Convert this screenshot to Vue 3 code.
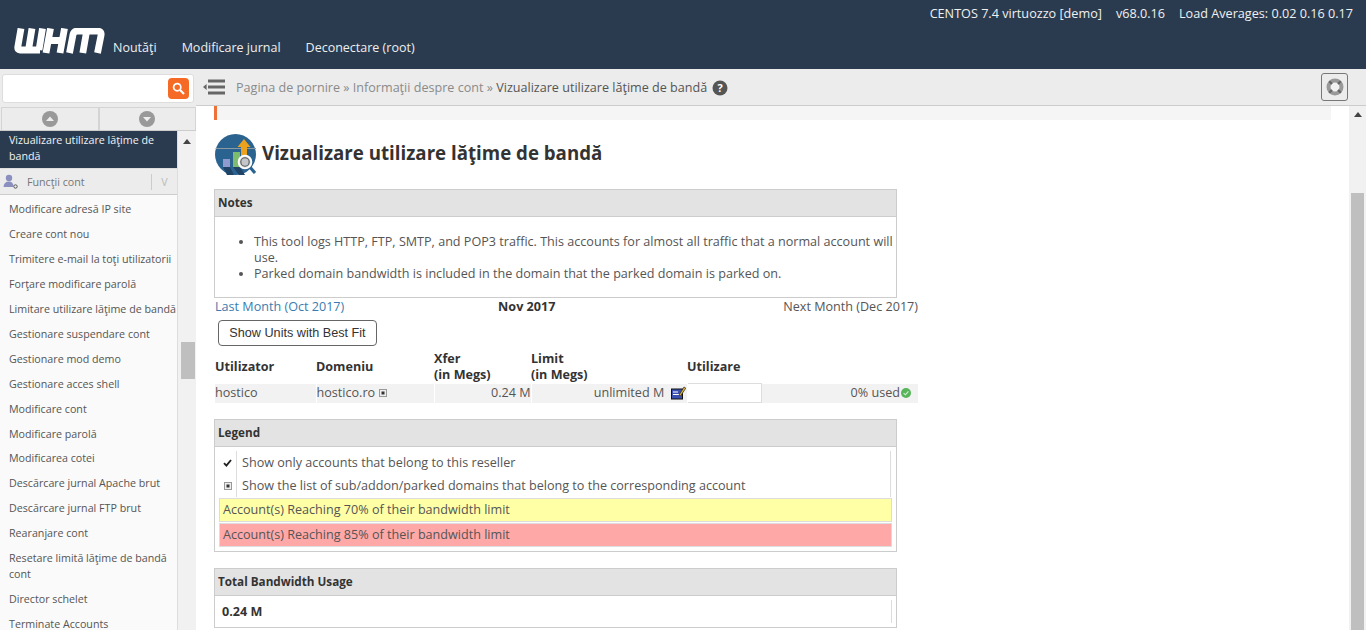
<script setup>
const topInfo = ['CENTOS 7.4 virtuozzo [demo]', 'v68.0.16', 'Load Averages: 0.02 0.16 0.17']
const nav = ['Noutăţi', 'Modificare jurnal', 'Deconectare (root)']
const menu = [
  'Modificare adresă IP site', 'Creare cont nou', 'Trimitere e-mail la toţi utilizatorii',
  'Forţare modificare parolă', 'Limitare utilizare lăţime de bandă', 'Gestionare suspendare cont',
  'Gestionare mod demo', 'Gestionare acces shell', 'Modificare cont', 'Modificare parolă',
  'Modificarea cotei', 'Descărcare jurnal Apache brut', 'Descărcare jurnal FTP brut',
  'Rearanjare cont', 'Resetare limită lăţime de bandă cont', 'Director schelet', 'Terminate Accounts'
]
</script>

<template>
  <div class="page">
    <header class="top">
      <div class="info"><span v-for="t in topInfo" :key="t">{{ t }}</span></div>
      <div class="navrow">
        <svg class="logo" width="92" height="26" viewBox="0 0 92 26" role="img" aria-label="WHM">
          <g fill="none" stroke="#fff" stroke-width="6.8">
            <path d="M7 0.5 L3.8 19 Q3.4 22 6 22 H26 M14.5 22 L18 0.5 M25 22 L28.5 0.5" />
            <path d="M36.5 0.5 L32 25 M50.5 0.5 L46 25 M34 12.5 H49" />
            <path d="M55.5 25 L59 6.5 Q60 3 63.5 3 H83 Q88 3 87 7.5 L83.5 25 M72.5 4 L68.8 25" />
          </g>
        </svg>
        <a v-for="n in nav" :key="n" class="navlink">{{ n }}</a>
      </div>
    </header>

    <div class="body">
      <aside class="side">
        <div class="searchwrap">
          <div class="search">
            <span class="sbtn">
              <svg width="13" height="13" viewBox="0 0 13 13"><circle cx="5.2" cy="5.2" r="3.6" fill="none" stroke="#fff" stroke-width="1.7"/><path d="M8 8 L12 12" stroke="#fff" stroke-width="2.2"/></svg>
            </span>
          </div>
        </div>
        <div class="updown">
          <div class="ud"><svg width="18" height="18" viewBox="0 0 18 18"><circle cx="9" cy="9" r="8" fill="#999"/><path d="M5 11 L9 6.5 L13 11Z" fill="#eee"/></svg></div>
          <div class="ud"><svg width="18" height="18" viewBox="0 0 18 18"><circle cx="9" cy="9" r="8" fill="#999"/><path d="M5 7 L9 11.5 L13 7Z" fill="#eee"/></svg></div>
        </div>
        <div class="sidescroll">
          <div class="menu">
            <div class="current">Vizualizare utilizare lăţime de bandă</div>
            <div class="group">
              <svg width="15" height="15" viewBox="0 0 15 15"><circle cx="6" cy="4" r="3.2" fill="#8a8fc0"/><path d="M0.5 13 Q1 7.5 6 7.5 Q10 7.5 10.5 12 L10 13Z" fill="#8a8fc0"/><circle cx="12.5" cy="12.5" r="1.7" fill="none" stroke="#555" stroke-width="1"/></svg>
              <span class="gname">Funcţii cont</span>
              <span class="gv">V</span>
            </div>
            <a v-for="m in menu" :key="m" class="item">{{ m }}</a>
          </div>
          <div class="sbar">
            <span class="tri"></span>
            <span class="thumb"></span>
          </div>
        </div>
      </aside>

      <div class="right">
        <div class="crumbs">
          <svg width="22" height="16" viewBox="0 0 22 16"><path d="M5 0.5H22V3.5H5ZM5 6.5H22V9.5H5ZM5 12.5H22V15.5H5Z" fill="#666"/><path d="M0 8 L3.6 5 V11Z" fill="#666"/></svg>
          <span class="trail"><span class="dim">Pagina de pornire » Informaţii despre cont » </span><span class="cur">Vizualizare utilizare lăţime de bandă</span></span>
          <svg class="q" width="16" height="16" viewBox="0 0 16 16"><circle cx="8" cy="8" r="7.5" fill="#555"/><text x="8" y="12" text-anchor="middle" font-size="11" font-weight="700" font-family="Open Sans" fill="#fff">?</text></svg>
          <span class="help">
            <svg width="20" height="20" viewBox="0 0 20 20"><circle cx="10" cy="10" r="6.5" fill="#f2f2f2" stroke="#999" stroke-width="4"/><path d="M4.2 4.2L7 7M15.8 4.2L13 7M4.2 15.8L7 13M15.8 15.8L13 13" stroke="#666" stroke-width="2.2"/></svg>
          </span>
        </div>
        <div class="contentrow">
          <main class="content">
            <div class="alertbar"></div>
            <div class="title">
              <svg width="42" height="42" viewBox="0 0 42 42">
                <circle cx="20.5" cy="20.5" r="20.5" fill="#2b6390"/>
                <path d="M0.5 14.5H41" stroke="#8b9aa0" stroke-width="1"/>
                <path d="M29 5L35.5 13H32V22H26V13H22.5Z" fill="#eda21e"/>
                <rect x="8" y="25" width="7" height="8" fill="#8f9bcf"/>
                <rect x="18" y="18" width="7" height="15" fill="#7dbb6e"/>
                <path d="M8 33H15L19 41H12ZM18 33H25L30 41H24Z" fill="#1f4468"/>
                <path d="M34 32L40 39" stroke="#2b6390" stroke-width="3.2"/>
                <circle cx="30" cy="28" r="6.4" fill="#d5d8da" stroke="#fff" stroke-width="1.8"/>
                <circle cx="30" cy="28" r="4.2" fill="#c4c7c9" stroke="#555" stroke-width="1.1"/>
              </svg>
              <h1>Vizualizare utilizare lăţime de bandă</h1>
            </div>

            <section class="box notes">
              <div class="boxhead">Notes</div>
              <ul>
                <li>This tool logs HTTP, FTP, SMTP, and POP3 traffic. This accounts for almost all traffic that a normal account will use.</li>
                <li>Parked domain bandwidth is included in the domain that the parked domain is parked on.</li>
              </ul>
            </section>

            <div class="months">
              <a class="link">Last Month (Oct 2017)</a>
              <b>Nov 2017</b>
              <span>Next Month (Dec 2017)</span>
            </div>
            <button class="fit" type="button">Show Units with Best Fit</button>

            <table class="usage">
              <colgroup><col class="c1"><col class="c2"><col class="c3"><col class="c4"><col class="c5"><col></colgroup>
              <thead>
                <tr>
                  <th>Utilizator</th><th>Domeniu</th><th>Xfer<br>(in Megs)</th><th>Limit<br>(in Megs)</th><th>Utilizare</th><th></th>
                </tr>
              </thead>
              <tbody>
                <tr>
                  <td>hostico</td>
                  <td>hostico.ro <svg class="plus" width="8" height="8" viewBox="0 0 8 8"><rect x=".5" y=".5" width="7" height="7" fill="#eee" stroke="#999"/><rect x="2.5" y="2.5" width="3" height="3" fill="#333"/></svg></td>
                  <td class="num">0.24 M</td>
                  <td class="num lim">unlimited M
                    <svg class="edit" width="15" height="14" viewBox="0 0 15 14"><rect x="0.5" y="3" width="11" height="10" fill="#3a4fb0" stroke="#111"/><path d="M2 6H7M2 8.5H9" stroke="#fff" stroke-width="1.2"/><path d="M8 9L13 1L14.8 2.2L9.5 10Z" fill="#d9b23a" stroke="#222" stroke-width=".7"/></svg>
                  </td>
                  <td class="bar"></td>
                  <td class="used"><span>0% used</span><svg width="10" height="10" viewBox="0 0 10 10"><circle cx="5" cy="5" r="5" fill="#58b55a"/><path d="M2.6 5.1L4.4 6.8L7.4 3.4" fill="none" stroke="#d8f0d8" stroke-width="1.1"/></svg></td>
                </tr>
              </tbody>
            </table>

            <section class="box legend">
              <div class="boxhead">Legend</div>
              <div class="lrows">
                <div class="lrow">
                  <span class="lic"><svg width="9" height="8" viewBox="0 0 9 8"><path d="M1 4.2L3.4 6.6L8 1" fill="none" stroke="#222" stroke-width="1.9"/></svg></span>
                  <span class="ltx">Show only accounts that belong to this reseller</span>
                </div>
                <div class="lrow">
                  <span class="lic"><svg width="8" height="8" viewBox="0 0 8 8"><rect x=".5" y=".5" width="7" height="7" fill="#eee" stroke="#999"/><rect x="2.5" y="2.5" width="3" height="3" fill="#333"/></svg></span>
                  <span class="ltx">Show the list of sub/addon/parked domains that belong to the corresponding account</span>
                </div>
                <div class="tint yellow">Account(s) Reaching 70% of their bandwidth limit</div>
                <div class="tint pink">Account(s) Reaching 85% of their bandwidth limit</div>
              </div>
            </section>

            <section class="box total">
              <div class="boxhead">Total Bandwidth Usage</div>
              <div class="tval"><b>0.24 M</b></div>
            </section>
          </main>
          <div class="sbar main">
            <span class="tri"></span>
            <span class="thumb"></span>
          </div>
        </div>
      </div>
    </div>
  </div>
</template>

<style>
html, body { margin: 0; overflow: hidden; background: #fff; }
</style>

<style scoped>
.page { width: 1366px; height: 630px; overflow: hidden; display: flex; flex-direction: column; font: 12.6px/16px "Open Sans", "Liberation Sans", sans-serif; color: #555; }
.top { height: 69px; flex: none; background: #2a3b4f; color: #fff; box-sizing: border-box; }
.info { display: flex; justify-content: flex-end; gap: 14px; padding: 5px 13px 0 0; height: 25px; box-sizing: border-box; color: #f0f0f0; font-size: 12.65px; }
.navrow { display: flex; align-items: center; padding: 5px 0 0 14px; height: 36px; box-sizing: border-box; font-size: 12.5px; }
.logo { margin-right: 7px; margin-top: -10px; }
.navlink { margin-right: 25px; color: #eee; margin-top: 5px; }
.body { flex: 1; display: flex; min-height: 0; }
.side { width: 196px; flex: none; display: flex; flex-direction: column; min-height: 0; background: #f1f1f1; }
.searchwrap { height: 38px; flex: none; box-sizing: border-box; padding: 5px 2px 4px 2px; background: #ececec; }
.search { height: 29px; box-sizing: border-box; background: #fff; border: 1px solid #ddd; border-radius: 3px; display: flex; justify-content: flex-end; align-items: center; padding-right: 4px; width: 192px; }
.sbtn { width: 21px; height: 21px; border-radius: 4px; background: #f56a25; display: flex; align-items: center; justify-content: center; }
.updown { height: 23px; flex: none; display: flex; border-bottom: 1px solid #ccc; padding-left: 1px; box-sizing: content-box; background: #ececec; }
.ud { flex: 1; border: 1px solid #d4d4d4; border-bottom: 0; display: flex; align-items: center; justify-content: center; }
.sidescroll { flex: 1; display: flex; min-height: 0; overflow: hidden; }
.menu { width: 178px; flex: none; background: #fafafa; border-right: 1px solid #ddd; box-sizing: border-box; font-size: 10.7px; }
.current { background: #2a3b4f; color: #f2f2f2; padding: 1px 8px 5px 9px; line-height: 16px; height: 37px; box-sizing: border-box; }
.group { height: 27px; box-sizing: border-box; background: #ececec; border-bottom: 1px solid #ccc; border-top: 1px solid #ddd; display: flex; align-items: center; padding-left: 3px; color: #777; }
.gname { margin-left: 9px; flex: 1; }
.gv { border-left: 1px solid #ccc; width: 25px; line-height: 16px; text-align: center; color: #bbb; }
.item { display: block; padding: 5.96px 0 3px 9px; line-height: 16px; color: #555; white-space: normal; }
.sbar { width: 18px; flex: 1; background: #f1f1f1; position: relative; }
.sbar .tri { position: absolute; left: 5px; top: 8px; border: 4px solid transparent; border-top: 0; border-bottom: 5px solid #444; }
.sbar .thumb { position: absolute; left: 3px; top: 211px; width: 14px; height: 37px; background: #bfbfbf; }
.sbar.main { width: 17px; flex: none; border-left: 0; }
.sbar.main .tri { left: 5px; top: 6px; }
.sbar.main .thumb { left: 2px; top: 87px; width: 13px; height: 437px; }
.right { flex: 1; display: flex; flex-direction: column; min-width: 0; }
.crumbs { height: 37px; flex: none; box-sizing: border-box; background: #ececec; border-bottom: 1px solid #ccc; display: flex; align-items: center; padding: 0 18px 0 7px; }
.trail { margin-left: 11px; margin-right: 5px; margin-top: 1px; font-size: 12.58px; }
.q { margin-top: 1px; }
.dim { color: #8a8a8a; }
.cur { color: #555; }
.help { margin-left: auto; width: 27px; height: 28px; box-sizing: border-box; border: 1px solid #777; border-radius: 3px; display: flex; align-items: center; justify-content: center; }
.contentrow { flex: 1; display: flex; min-height: 0; overflow: hidden; }
.content { flex: 1; min-width: 0; padding-left: 18px; overflow: hidden; }
.alertbar { height: 14px; width: 1114px; background: #f5f5f5; border-left: 3px solid #f0703a; }
.title { display: flex; align-items: center; gap: 5px; padding: 14px 0 0 1px; height: 42px; }
h1 { margin: 0; font-size: 18.7px; line-height: 26px; font-weight: 700; color: #333; margin-top: -5px; }
.box { width: 683px; box-sizing: border-box; border: 1px solid #ccc; background: #fff; }
.boxhead { height: 27px; box-sizing: border-box; background: #e3e3e3; border-bottom: 1px solid #ccc; font-weight: 700; color: #333; padding: 4px 3px 0; font-size: 11.7px; }
.notes { margin-top: 13px; height: 109px; }
.notes ul { margin: 17px 0 0; padding: 0 0 0 39px; }
.months { display: flex; justify-content: space-between; width: 703px; margin-left: 1px; height: 18px; box-sizing: border-box; padding-top: 1px; position: relative; align-items: flex-start; }
.months b { color: #333; position: relative; left: -37px; }
.link { color: #3a7cb0; }
.fit { display: block; margin: 4px 0 0 4px; height: 26px; width: 159px; box-sizing: border-box; border: 1px solid #666; border-radius: 4px; background: #fff; color: #333; font: 12.65px "Liberation Sans", Arial, sans-serif; padding: 0; }
.usage { border-collapse: collapse; table-layout: fixed; width: 703px; margin: 5px 0 0 1px; }
.c1 { width: 101px; } .c2 { width: 118px; } .c3 { width: 97px; } .c4 { width: 156px; } .c5 { width: 74px; }
th { text-align: left; font-weight: 700; color: #333; padding: 0; line-height: 16px; height: 32px; vertical-align: middle; }
td { background: #f2f2f2; height: 18px; padding: 0; border-right: 1px solid #fff; line-height: 16px; color: #555; white-space: nowrap; }
.plus { margin-left: 1px; }
.num { text-align: right; }
.lim { padding-right: 1px; }
.edit { vertical-align: -3px; margin-left: 3px; }
.bar { background: #fff; border: 1px solid #ddd; }
.used { text-align: right; border: 0; }
.used span { margin-right: 1px; }
.used svg { vertical-align: -1px; margin-right: 7px; margin-left: 0; }
.legend { margin-top: 16px; height: 133px; }
.lrows { padding: 4px 4px 0; }
.lrow { display: flex; height: 23px; width: 672px; }
.lic { width: 17px; flex: none; border-right: 1px solid #ddd; display: flex; align-items: center; justify-content: center; }
.ltx { flex: 1; padding: 4px 0 0 5px; border-right: 1px solid #ddd; }
.tint { height: 24px; box-sizing: border-box; border: 1px solid #ddd; line-height: 22px; padding-left: 3px; width: 673px; margin-bottom: 1px; color: #555; }
.yellow { background: #ffffa6; margin-top: 1px; }
.pink { background: #ffa8a8; }
.total { margin-top: 16px; height: 60px; }
.tval { margin: 4px 4px 0 7px; height: 23px; border-right: 1px solid #ddd; line-height: 23px; color: #333; }
</style>
